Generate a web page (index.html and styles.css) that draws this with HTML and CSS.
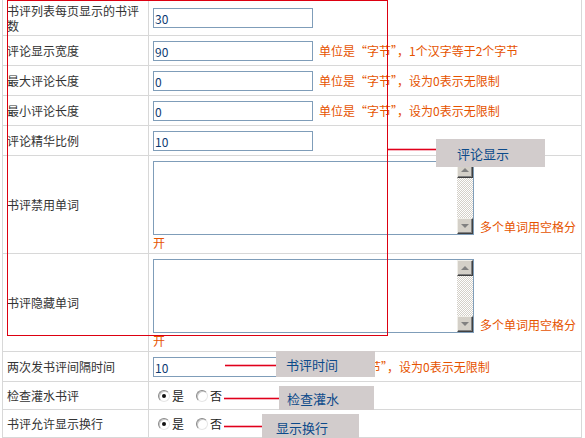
FILE: index.html
```html
<!DOCTYPE html>
<html lang="zh">
<head>
<meta charset="utf-8">
<title>书评设置</title>
<link rel="stylesheet" href="styles.css">
</head>
<body>
<div class="form">
  <div class="row h36">
    <div class="label">书评列表每页显示的书评数</div>
    <div class="field"><span class="text w160">30</span></div>
  </div>
  <div class="row h30">
    <div class="label">评论显示宽度</div>
    <div class="field"><span class="text w160">90</span><span class="hint">单位是“字节”，1个汉字等于2个字节</span></div>
  </div>
  <div class="row h30">
    <div class="label">最大评论长度</div>
    <div class="field"><span class="text w160">0</span><span class="hint">单位是“字节”，设为0表示无限制</span></div>
  </div>
  <div class="row h30">
    <div class="label">最小评论长度</div>
    <div class="field"><span class="text w160">0</span><span class="hint">单位是“字节”，设为0表示无限制</span></div>
  </div>
  <div class="row h30">
    <div class="label">评论精华比例</div>
    <div class="field"><span class="text w160">10</span></div>
  </div>
  <div class="row h98">
    <div class="label">书评禁用单词</div>
    <div class="field area-field">
      <div class="area-line">
        <div class="textarea">
          <div class="area-body"></div>
          <div class="scrollbar">
            <div class="sb-btn"><span class="tri up"></span></div>
            <div class="sb-track"></div>
            <div class="sb-btn"><span class="tri down"></span></div>
          </div>
        </div>
        <span class="hint tail">多个单词用空格分</span>
      </div>
      <div class="hint wrap">开</div>
    </div>
  </div>
  <div class="row h98">
    <div class="label">书评隐藏单词</div>
    <div class="field area-field">
      <div class="area-line">
        <div class="textarea">
          <div class="area-body"></div>
          <div class="scrollbar">
            <div class="sb-btn"><span class="tri up"></span></div>
            <div class="sb-track"></div>
            <div class="sb-btn"><span class="tri down"></span></div>
          </div>
        </div>
        <span class="hint tail">多个单词用空格分</span>
      </div>
      <div class="hint wrap">开</div>
    </div>
  </div>
  <div class="row h30">
    <div class="label">两次发书评间隔时间</div>
    <div class="field"><span class="text w150">10</span><span class="hint">单位是“字节”，设为0表示无限制</span></div>
  </div>
  <div class="row h28">
    <div class="label">检查灌水书评</div>
    <div class="field">
      <span class="radio checked"></span><span class="opt">是</span>
      <span class="radio"></span><span class="opt">否</span>
    </div>
  </div>
  <div class="row h28">
    <div class="label">书评允许显示换行</div>
    <div class="field">
      <span class="radio checked"></span><span class="opt">是</span>
      <span class="radio"></span><span class="opt">否</span>
    </div>
  </div>
</div>

<div class="frame"></div>
<div class="line l1"></div>
<div class="note n1">评论显示</div>
<div class="line l2"></div>
<div class="note n2">书评时间</div>
<div class="line l3"></div>
<div class="note n3">检查灌水</div>
<div class="line l4"></div>
<div class="note n4">显示换行</div>
</body>
</html>
```

FILE: styles.css
```css
html, body {
  margin: 0;
  padding: 0;
  background: #fff;
}
body {
  position: relative;
  width: 585px;
  height: 438px;
  overflow: hidden;
  font-family: "Noto Sans CJK SC", "Liberation Sans", sans-serif;
  font-size: 12px;
  color: #333;
}
.form {
  margin-left: 2px;
  width: 580px;
  border-left: 1px solid #d8d8d8;
  border-right: 1px solid #d8d8d8;
  box-sizing: border-box;
}
.row {
  display: flex;
  border-bottom: 1px solid #d8d8d8;
  box-sizing: border-box;
}
.h36 { height: 36px; }
.h30 { height: 30px; }
.h28 { height: 28px; }
.h98 { height: 98px; }
.label {
  width: 146px;
  flex: none;
  box-sizing: border-box;
  border-right: 1px solid #d8d8d8;
  padding: 0 6px 0 4px;
  display: flex;
  align-items: center;
  line-height: 15px;
  color: #333;
}
.field {
  flex: 1;
  padding-left: 4px;
  display: flex;
  align-items: center;
  line-height: 14px;
}
.text {
  display: inline-block;
  height: 20px;
  box-sizing: border-box;
  border: 1px solid #7f9db9;
  padding: 2px 1px 0;
  line-height: 15px;
  color: #0b3a72;
  background: #fff;
}
.w160 { width: 160px; }
.w150 { width: 150px; }
.hint {
  color: #e65300;
  margin-left: 6px;
  white-space: nowrap;
}
.area-field {
  flex-direction: column;
  align-items: flex-start;
  padding-top: 5px;
}
.area-line {
  display: flex;
  align-items: flex-end;
}
.textarea {
  width: 321px;
  height: 74px;
  box-sizing: border-box;
  border: 1px solid #7f9db9;
  display: flex;
  background: #fff;
}
.area-body { flex: 1; }
.scrollbar {
  width: 16px;
  display: flex;
  flex-direction: column;
}
.sb-btn {
  height: 16px;
  box-sizing: border-box;
  background: #d4d0c8;
  border-top: 1px solid #f0eee8;
  border-left: 1px solid #f0eee8;
  border-right: 1px solid #404040;
  border-bottom: 1px solid #404040;
  box-shadow: inset -1px -1px 0 #808080;
  display: flex;
  align-items: center;
  justify-content: center;
}
.sb-track {
  flex: 1;
  background: repeating-conic-gradient(#fff 0 25%, #d4d0c8 0 50%) 0 0 / 2px 2px;
}
.tri {
  width: 0;
  height: 0;
  border-left: 4px solid transparent;
  border-right: 4px solid transparent;
}
.tri.up { border-bottom: 4px solid #808080; }
.tri.down { border-top: 4px solid #808080; }
.tail { margin-bottom: 1px; }
.wrap {
  margin-left: 0;
  margin-top: 1px;
  line-height: 13px;
}
.radio {
  width: 12px;
  height: 12px;
  box-sizing: border-box;
  border-radius: 50%;
  border: 1px solid;
  border-color: #8a8a8a #e6e6e6 #e6e6e6 #8a8a8a;
  background: #fff;
  box-shadow: inset 1px 1px 0 #c8c8c8;
  margin-left: 5px;
  position: relative;
  flex: none;
}
.radio + .opt { margin-left: 2px; }
.opt + .radio { margin-left: 12px; }
.radio.checked::after {
  content: "";
  position: absolute;
  left: 3px;
  top: 3px;
  width: 4px;
  height: 4px;
  border-radius: 50%;
  background: #111;
}
.opt { color: #222; }

/* annotation overlays */
.frame {
  position: absolute;
  left: 7px;
  top: 0;
  width: 381px;
  height: 336px;
  box-sizing: border-box;
  border: 1px solid #dd0011;
}
.line {
  position: absolute;
  height: 1px;
  background: #e0001a;
  box-shadow: 0 -1px 0 #f7b3bd, 0 1px 0 #f7b3bd;
}
.l1 { left: 388px; top: 149px; width: 48px; }
.l2 { left: 225px; top: 365px; width: 51px; }
.l3 { left: 224px; top: 398px; width: 55px; }
.l4 { left: 224px; top: 426px; width: 38px; }
.note {
  position: absolute;
  background: #d2cccc;
  color: #0c4a8a;
  font-size: 13px;
  display: flex;
  align-items: center;
  box-sizing: border-box;
}
.n1 { left: 436px; top: 139px; width: 109px; height: 28px; padding-left: 21px; }
.n2 { left: 276px; top: 351px; width: 99px; height: 26px; padding-left: 10px; }
.n3 { left: 279px; top: 386px; width: 95px; height: 24px; padding-left: 8px; }
.n4 { left: 262px; top: 414px; width: 97px; height: 26px; padding-left: 14px; }
```
